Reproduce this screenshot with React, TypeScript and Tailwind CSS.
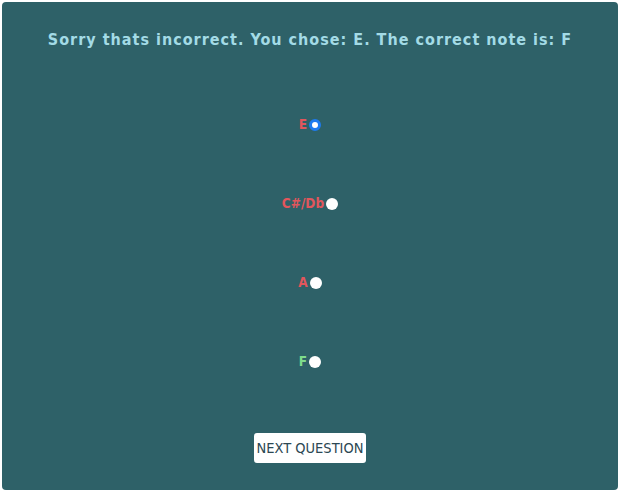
import React, { useState } from "react";

type Choice = {
  note: string;
  correct: boolean;
};

const choices: Choice[] = [
  { note: "E", correct: false },
  { note: "C#/Db", correct: false },
  { note: "A", correct: false },
  { note: "F", correct: true },
];

export default function App() {
  const [selected, setSelected] = useState("E");

  return (
    <div className="w-[620px] h-[492px] bg-white p-[2px]">
      <div
        className="h-full rounded-[4px] bg-[#2e6168] flex flex-col items-center"
        style={{ fontFamily: '"DejaVu Sans Condensed", "DejaVu Sans", sans-serif' }}
      >
        <h1 className="mt-[28px] text-[16px] font-bold tracking-[1px] text-[#a3dbe6] leading-[20px]">
          Sorry thats incorrect. You chose: E. The correct note is: F
        </h1>

        {/* answer options */}
        <div className="mt-[67px] flex flex-col items-center gap-[63px]">
          {choices.map((c) => (
            <label
              key={c.note}
              className="flex items-center h-[16px] cursor-pointer"
              onClick={() => setSelected(c.note)}
            >
              <span
                className={`text-[13.5px] font-bold leading-none ${
                  c.correct ? "text-[#7fdc8c]" : "text-[#e2565c]"
                }`}
              >
                {c.note}
              </span>
              {selected === c.note ? (
                <span className="ml-[2px] w-[12px] h-[12px] rounded-full bg-white border-[3px] border-[#1d7bf0]" />
              ) : (
                <span className="ml-[2px] w-[12px] h-[12px] rounded-full bg-white" />
              )}
            </label>
          ))}
        </div>

        <button className="mt-[63px] w-[112px] h-[30px] rounded-[3px] bg-white text-[#2c4853] text-[14.5px] leading-none whitespace-nowrap flex items-center justify-center">
          NEXT QUESTION
        </button>
      </div>
    </div>
  );
}
